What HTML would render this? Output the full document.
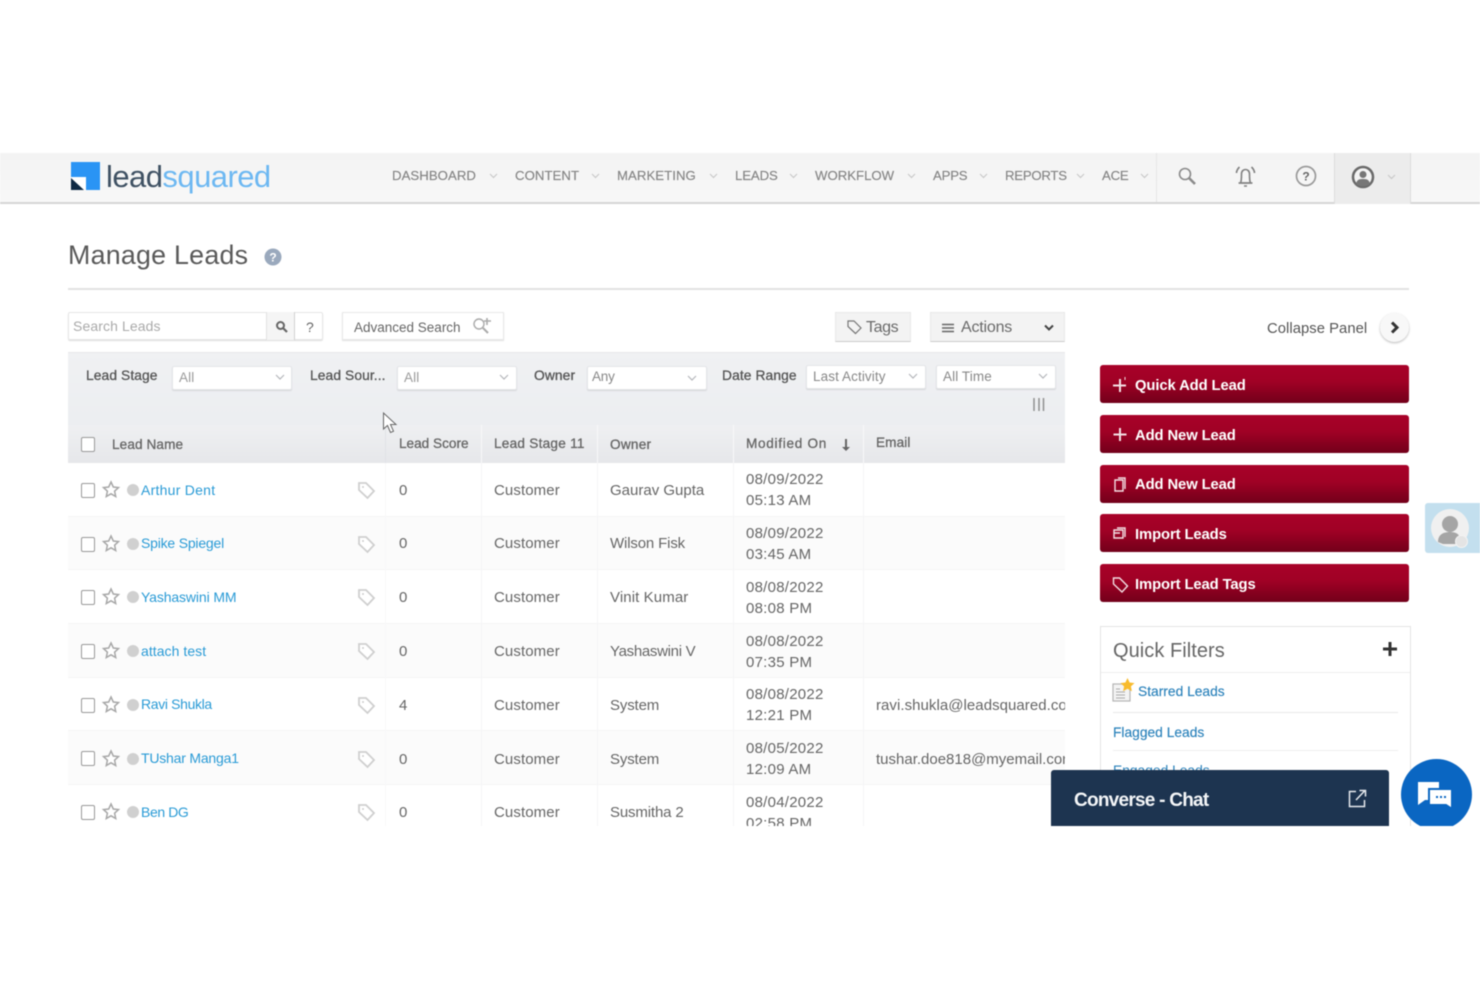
<!DOCTYPE html>
<html><head><meta charset="utf-8"><title>Manage Leads</title>
<style>
html,body{margin:0;padding:0;background:#fff}
#p{position:relative;width:1480px;height:987px;overflow:hidden;background:#fff;font-family:"Liberation Sans",sans-serif;color:#666;filter:blur(.5px)}
#p div,#p span.t,#p svg{position:absolute}
.t{position:absolute;white-space:nowrap;font-size:14px;line-height:18px;letter-spacing:.1px}
.nav{color:#858585;font-size:13.2px;top:167px;letter-spacing:.05px;-webkit-text-stroke:.15px #858585}
.th{color:#666;font-size:13.6px;font-weight:400;-webkit-text-stroke:.3px #666}
.lb{color:#555;font-size:13.8px;-webkit-text-stroke:.3px #555}
.lnk{color:#2a9bd6;font-size:14px;letter-spacing:-.05px}
.d{font-size:15px;letter-spacing:.25px}
.sel{background:#fff;border:1px solid #e4e5e8;border-radius:2px;box-sizing:border-box;height:24px;box-shadow:0 1px 1px #d5d6da}
.cb{width:12px;height:13px;border:1.5px solid #999;border-radius:2px;background:#fff;left:81px;box-sizing:content-box}
.btn{left:1100px;width:309px;height:38px;border-radius:3px;background:linear-gradient(#a80229 0%,#a00125 45%,#72001a 100%)}
.bt{color:#fff;font-size:14.8px;font-weight:700;left:1135px;letter-spacing:-.1px}
</style></head><body><div id="p">

<!-- nav -->
<div style="left:0;top:153px;width:1480px;height:49px;background:linear-gradient(#f3f3f3,#f8f8f8);border-bottom:2px solid #d6d6d6"></div>
<div style="left:1156px;top:153px;width:1px;height:49px;background:#e6e6e6"></div>
<div style="left:1334px;top:153px;width:77px;height:51px;background:#ececec;border-left:1px solid #dcdcdc;border-right:1px solid #dcdcdc;box-sizing:border-box"></div>

<svg style="left:71px;top:162px" width="29" height="28" viewBox="0 0 29 28"><rect width="29" height="28" fill="#2a94f4"/><rect y="15" width="15" height="13" fill="#fff"/><path d="M0 16v12h13z" fill="#0f2a44"/></svg>
<span class="t" style="left:106px;top:158px;font-size:31px;line-height:38px;letter-spacing:-.55px;color:#3f5163">lead<span style="color:#6db8f2">squared</span></span>

<span class="t nav" style="left:392px">DASHBOARD</span>
<span class="t nav" style="left:515px">CONTENT</span>
<span class="t nav" style="left:617px">MARKETING</span>
<span class="t nav" style="left:735px;letter-spacing:-.1px">LEADS</span>
<span class="t nav" style="left:815px;letter-spacing:0">WORKFLOW</span>
<span class="t nav" style="left:933px;letter-spacing:-.2px">APPS</span>
<span class="t nav" style="left:1005px;letter-spacing:-.25px">REPORTS</span>
<span class="t nav" style="left:1102px;letter-spacing:-.2px">ACE</span>
<svg style="left:0;top:0" width="1480" height="210" fill="none" stroke="#c9c9c9" stroke-width="1.200"><path d="M490 174l3.500 3.500 3.500-3.500M592 174l3.500 3.500 3.500-3.500M710 174l3.500 3.500 3.500-3.500M790 174l3.500 3.500 3.500-3.500M908 174l3.500 3.500 3.500-3.500M980 174l3.500 3.500 3.500-3.500M1077 174l3.500 3.500 3.500-3.500M1141 174l3.500 3.500 3.500-3.500M1388 175l3.500 3.500 3.500-3.500"/></svg>
<svg style="left:1177px;top:166px" width="20" height="20" fill="none" stroke="#8b8b8b"><circle cx="8" cy="8" r="5.500" stroke-width="1.600"/><path d="M12 12l6 6" stroke-width="2.600"/></svg>
<svg style="left:1235px;top:165px" width="21" height="24" fill="none" stroke="#808080" stroke-width="1.600"><path d="M5.500 18c1-2 1-5 1-9 0-6 8-6 8 0 0 4 0 7 1 9z"/><path d="M3.500 18h14M9 21h3M1.500 8c0-2 1-4 3-6M19.500 8c0-2-1-4-3-6"/></svg>
<svg style="left:1295px;top:165px" width="22" height="22" fill="none"><circle cx="11" cy="11" r="9.500" stroke="#9a9a9a" stroke-width="1.700"/><text x="11" y="15.500" font-family="Liberation Sans" font-weight="700" font-size="12" text-anchor="middle" fill="#666">?</text></svg>
<svg style="left:1351px;top:165px" width="24" height="24"><circle cx="12" cy="12" r="10" fill="#f4f4f4" stroke="#6a6a6a" stroke-width="2.500"/><circle cx="12" cy="9.500" r="3.500" fill="#777"/><path d="M5 19c1-5 4-5 7-5s6 0 7 5c-3 3-11 3-14 0z" fill="#777"/></svg>

<!-- title -->
<span class="t" style="left:68px;top:236px;font-size:26.800px;line-height:38px;color:#5a5a5a;letter-spacing:.25px">Manage Leads</span>
<svg style="left:264px;top:248px" width="18" height="18"><circle cx="9" cy="9" r="8.500" fill="#9aa9bd"/><text x="9" y="13.500" font-family="Liberation Sans" font-weight="700" font-size="12" text-anchor="middle" fill="#fff">?</text></svg>
<div style="left:68px;top:288px;width:1341px;height:1.500px;background:#e2e2e2"></div>

<!-- search -->
<div style="left:68px;top:312px;width:255px;height:28px;border:1px solid #e6e6e6;border-radius:2px;box-sizing:border-box;box-shadow:0 1px 1px #ddd"></div>
<span class="t" style="left:73px;top:317px;color:#aaa;font-size:14px">Search Leads</span>
<div style="left:266px;top:312px;width:29px;height:28px;background:#f5f5f5;border-left:1px solid #e2e2e2;border-right:1px solid #d2d2d2;box-sizing:border-box"></div>
<svg style="left:275px;top:320px" width="13" height="13" fill="none" stroke="#666"><circle cx="5.500" cy="5.500" r="3.500" stroke-width="2"/><path d="M8 8l4 4" stroke-width="2.200"/></svg>
<span class="t" style="left:306px;top:318px;color:#666">?</span>
<div style="left:342px;top:312px;width:162px;height:28px;border:1px solid #e8e8e8;box-sizing:border-box;box-shadow:0 1px 1px #e2e2e2"></div>
<span class="t" style="left:354px;top:319px;color:#666;font-size:13.500px;letter-spacing:0">Advanced Search</span>
<svg style="left:472px;top:317px" width="20" height="18" fill="none" stroke="#aaa" stroke-width="1.400"><circle cx="7" cy="7" r="5"/><path d="M11 11l5 5" stroke-width="2"/><path d="M15 1v7M12 4h7" stroke-width="1.600"/></svg>

<!-- tags / actions -->
<div style="left:835px;top:312px;width:76px;height:30px;background:#f3f3f3;border:1px solid #e8e8e8;border-bottom:1.500px solid #ccc;box-sizing:border-box"></div>
<svg style="left:847px;top:320px" width="16" height="15" fill="none" stroke="#777" stroke-width="1.200"><path d="M1 1h6l7 7-5.500 5.500-7.500-7z"/></svg>
<span class="t" style="left:866px;top:319px;font-size:16px;color:#6a6a6a;letter-spacing:-.4px">Tags</span>
<div style="left:930px;top:312px;width:135px;height:30px;background:#f3f3f3;border:1px solid #e8e8e8;border-bottom:1.500px solid #ccc;box-sizing:border-box"></div>
<svg style="left:942px;top:323px" width="12" height="10" stroke="#666" stroke-width="1.500"><path d="M0 1.500h12M0 5h12M0 8.500h12"/></svg>
<span class="t" style="left:961px;top:319px;font-size:16px;color:#6a6a6a;letter-spacing:-.2px">Actions</span>
<svg style="left:1044px;top:324px" width="10" height="8" fill="none" stroke="#444" stroke-width="2"><path d="M1 1.500l4 4 4-4"/></svg>

<!-- filter bar -->
<div style="left:68px;top:352px;width:997px;height:73px;background:linear-gradient(#f0f1f3,#eceef1);border-top:1px solid #e8e8ea;box-sizing:border-box"></div>
<span class="t lb" style="left:86px;top:367px">Lead Stage</span>
<div class="sel" style="left:172px;top:366px;width:120px"></div>
<span class="t" style="left:179px;top:369px;color:#9a9a9a;font-size:13.500px">All</span>
<span class="t lb" style="left:310px;top:367px">Lead Sour...</span>
<div class="sel" style="left:397px;top:366px;width:120px"></div>
<span class="t" style="left:404px;top:369px;color:#9a9a9a;font-size:13.500px">All</span>
<span class="t lb" style="left:534px;top:367px">Owner</span>
<div class="sel" style="left:587px;top:366px;width:120px"></div>
<span class="t" style="left:592px;top:368px;color:#888;font-size:13.500px;letter-spacing:-.2px">Any</span>
<span class="t lb" style="left:722px;top:367px">Date Range</span>
<div class="sel" style="left:806px;top:365px;width:120px"></div>
<span class="t" style="left:813px;top:368px;color:#888;font-size:13.500px">Last Activity</span>
<div class="sel" style="left:936px;top:365px;width:120px"></div>
<span class="t" style="left:943px;top:368px;color:#888;font-size:13.500px">All Time</span>
<svg style="left:0;top:0" width="1480" height="420" fill="none" stroke="#b5b7bb" stroke-width="1.200"><path d="M276 375l4 4 4-4M500 375l4 4 4-4M688 376l4 4 4-4M909 374l4 4 4-4M1039 374l4 4 4-4"/><path d="M1034 398v13M1039 398v13M1043.500 398v13" stroke="#8f8f8f" stroke-width="1.500"/></svg>

<!-- table header -->
<div style="left:68px;top:425px;width:997px;height:38px;background:linear-gradient(#eff0f2,#e6e7ea)"></div>
<div style="left:385px;top:425px;width:1px;height:38px;background:#e0e2e6"></div>
<div style="left:481px;top:425px;width:1px;height:38px;background:#f8f8f9"></div>
<div style="left:597px;top:425px;width:1px;height:38px;background:#f8f8f9"></div>
<div style="left:733px;top:425px;width:1px;height:38px;background:#f8f8f9"></div>
<div style="left:863px;top:425px;width:1px;height:38px;background:#f8f8f9"></div>
<div class="cb" style="top:437px"></div>
<span class="t th" style="left:112px;top:436px">Lead Name</span>
<span class="t th" style="left:399px;top:435px;letter-spacing:0">Lead Score</span>
<span class="t th" style="left:494px;top:435px;letter-spacing:.25px">Lead Stage 11</span>
<span class="t th" style="left:610px;top:436px;letter-spacing:.25px">Owner</span>
<span class="t th" style="left:746px;top:435px;letter-spacing:.7px">Modified On</span>
<svg style="left:841px;top:439px" width="10" height="13" fill="#666"><path d="M4 0h2v8h3l-4 4-4-4h3z"/></svg>
<span class="t th" style="left:876px;top:434px">Email</span>

<!-- rows backgrounds -->
<div style="left:68px;top:517px;width:997px;height:53px;background:#fbfbfb"></div>
<div style="left:68px;top:624px;width:997px;height:53px;background:#fbfbfb"></div>
<div style="left:68px;top:731px;width:997px;height:53px;background:#fbfbfb"></div>
<div style="left:68px;top:516px;width:997px;height:1px;background:#f5f5f6"></div>
<div style="left:68px;top:569px;width:997px;height:1px;background:#f5f5f6"></div>
<div style="left:68px;top:623px;width:997px;height:1px;background:#f5f5f6"></div>
<div style="left:68px;top:677px;width:997px;height:1px;background:#f5f5f6"></div>
<div style="left:68px;top:730px;width:997px;height:1px;background:#f5f5f6"></div>
<div style="left:68px;top:784px;width:997px;height:1px;background:#f5f5f6"></div>
<div style="left:481px;top:463px;width:1px;height:363px;background:#f5f5f6"></div>
<div style="left:597px;top:463px;width:1px;height:363px;background:#f5f5f6"></div>
<div style="left:733px;top:463px;width:1px;height:363px;background:#f5f5f6"></div>
<div style="left:863px;top:463px;width:1px;height:363px;background:#f5f5f6"></div>
<div style="left:385px;top:463px;width:1px;height:363px;background:#f8f8f9"></div>

<!-- row icons -->
<svg style="left:0;top:0" width="400" height="830">
<defs>
<g id="ri"><path d="M111 -8l2.300 5 5.200.6-3.900 3.600 1.100 5.300-4.700-2.700-4.700 2.700 1.100-5.300-3.900-3.600 5.200-.6z" fill="#fff" stroke="#a8a8a8" stroke-width="1.500"/><circle cx="133" cy="0" r="6" fill="#d0d0d0"/><path d="M359 -7h7l8 8-6.500 7-8.500-8z" fill="#fff" stroke="#cfcfcf" stroke-width="1.800"/><circle cx="363" cy="-3" r="1" fill="#cfcfcf"/></g>
</defs>
<use href="#ri" y="490"/><use href="#ri" y="544"/><use href="#ri" y="597"/><use href="#ri" y="651"/><use href="#ri" y="705"/><use href="#ri" y="759"/><use href="#ri" y="812"/>
</svg>
<div class="cb" style="top:483px"></div><div class="cb" style="top:537px"></div><div class="cb" style="top:590px"></div><div class="cb" style="top:644px"></div><div class="cb" style="top:698px"></div><div class="cb" style="top:751px"></div><div class="cb" style="top:805px"></div>

<span class="t lnk" style="left:141px;top:481px;letter-spacing:.25px">Arthur Dent</span>
<span class="t lnk" style="left:141px;top:534px;letter-spacing:-.2px">Spike Spiegel</span>
<span class="t lnk" style="left:141px;top:588px;letter-spacing:-.12px">Yashaswini MM</span>
<span class="t lnk" style="left:141px;top:642px;letter-spacing:.05px">attach test</span>
<span class="t lnk" style="left:141px;top:695px;letter-spacing:-.35px">Ravi Shukla</span>
<span class="t lnk" style="left:141px;top:749px;letter-spacing:-.2px">TUshar Manga1</span>
<span class="t lnk" style="left:141px;top:803px;letter-spacing:-.4px">Ben DG</span>

<span class="t" style="left:399px;top:482px;font-size:15px">0</span><span class="t" style="left:494px;top:482px;font-size:15px">Customer</span><span class="t" style="left:610px;top:482px;font-size:15px;letter-spacing:0">Gaurav Gupta</span><span class="t d" style="left:746px;top:471px">08/09/2022</span><span class="t d" style="left:746px;top:492px">05:13 AM</span>
<span class="t" style="left:399px;top:535px;font-size:15px">0</span><span class="t" style="left:494px;top:535px;font-size:15px">Customer</span><span class="t" style="left:610px;top:535px;font-size:15px;letter-spacing:-.15px">Wilson Fisk</span><span class="t d" style="left:746px;top:525px">08/09/2022</span><span class="t d" style="left:746px;top:546px">03:45 AM</span>
<span class="t" style="left:399px;top:589px;font-size:15px">0</span><span class="t" style="left:494px;top:589px;font-size:15px">Customer</span><span class="t" style="left:610px;top:589px;font-size:15px">Vinit Kumar</span><span class="t d" style="left:746px;top:579px">08/08/2022</span><span class="t d" style="left:746px;top:600px">08:08 PM</span>
<span class="t" style="left:399px;top:643px;font-size:15px">0</span><span class="t" style="left:494px;top:643px;font-size:15px">Customer</span><span class="t" style="left:610px;top:643px;font-size:15px;letter-spacing:-.3px">Yashaswini V</span><span class="t d" style="left:746px;top:633px">08/08/2022</span><span class="t d" style="left:746px;top:654px">07:35 PM</span>
<span class="t" style="left:399px;top:697px;font-size:15px">4</span><span class="t" style="left:494px;top:697px;font-size:15px">Customer</span><span class="t" style="left:610px;top:697px;font-size:15px;letter-spacing:-.15px">System</span><span class="t d" style="left:746px;top:686px">08/08/2022</span><span class="t d" style="left:746px;top:707px">12:21 PM</span>
<span class="t" style="left:399px;top:751px;font-size:15px">0</span><span class="t" style="left:494px;top:751px;font-size:15px">Customer</span><span class="t" style="left:610px;top:751px;font-size:15px;letter-spacing:-.15px">System</span><span class="t d" style="left:746px;top:740px">08/05/2022</span><span class="t d" style="left:746px;top:761px">12:09 AM</span>
<span class="t" style="left:399px;top:804px;font-size:15px">0</span><span class="t" style="left:494px;top:804px;font-size:15px">Customer</span><span class="t" style="left:610px;top:804px;font-size:15px;letter-spacing:-.15px">Susmitha 2</span><span class="t d" style="left:746px;top:794px">08/04/2022</span><span class="t d" style="left:746px;top:815px">02:58 PM</span>

<div style="left:876px;top:690px;width:189px;height:90px;overflow:hidden">
<span class="t" style="left:0;top:7px;font-size:15px;letter-spacing:.05px">ravi.shukla@leadsquared.com</span>
<span class="t" style="left:0;top:61px;font-size:15px;letter-spacing:0">tushar.doe818@myemail.com</span>
</div>

<!-- cursor -->
<svg style="left:382px;top:412px" width="17" height="23"><path d="M1.500 1v16l4-3.500 3 7 3-1.300-3-6.700h5.500z" fill="#fff" stroke="#666" stroke-width="1"/></svg>

<!-- right panel -->
<span class="t" style="left:1267px;top:320px;font-size:14.800px;color:#555;letter-spacing:.05px">Collapse Panel</span>
<div style="left:1380px;top:313px;width:29px;height:29px;border-radius:50%;background:#f8f8f8;box-shadow:0 1px 2px #bbb"></div>
<svg style="left:1390px;top:321px" width="10" height="13" fill="none" stroke="#333" stroke-width="3"><path d="M2 1.500l5 5-5 5"/></svg>

<div class="btn" style="top:365px"></div><div class="btn" style="top:415px"></div><div class="btn" style="top:465px"></div><div class="btn" style="top:514px"></div><div class="btn" style="top:564px"></div>
<span class="t bt" style="top:377px">Quick Add Lead</span>
<span class="t bt" style="top:427px">Add New Lead</span>
<span class="t bt" style="top:476px">Add New Lead</span>
<span class="t bt" style="top:526px">Import Leads</span>
<span class="t bt" style="top:576px">Import Lead Tags</span>
<svg style="left:1110px;top:370px" width="22" height="230" fill="none" stroke="#f3dfe3" stroke-width="1.400">
<path d="M10 9v13M3 15.500h13" stroke-width="2"/><path d="M15 7v3" stroke-width="1"/>
<path d="M10 58v13M3.500 64.500h13" stroke-width="2"/>
<path d="M5 110h8v11H5zM8 108h7v11"/>
<path d="M4 160h9v8H4zM7 158h8v9M4 163h6" />
<path d="M3.500 208h6l8 8-5.500 6-8.500-8z"/>
</svg>

<!-- quick filters -->
<div style="left:1100px;top:626px;width:311px;height:210px;border:1.500px solid #e4e4e4;box-sizing:border-box;background:#fff"></div>
<span class="t" style="left:1113px;top:639px;font-size:20px;line-height:25px;color:#666;letter-spacing:.05px">Quick Filters</span>
<svg style="left:1383px;top:642px" width="14" height="14"><path d="M5.500 0h3v5.500H14v3H8.500V14h-3V8.500H0v-3h5.500z" fill="#333"/></svg>
<div style="left:1101px;top:672px;width:309px;height:1px;background:#eee"></div>
<svg style="left:1112px;top:677px" width="24" height="25"><rect x="1" y="7" width="17" height="17" fill="#f4f4f4" stroke="#b5b5b5" stroke-width="1.200"/><path d="M4 12h4M4 15h9M4 18h9M4 21h9" stroke="#a8a8a8"/><path d="M15.500 1l2.100 4.500 4.900.6-3.600 3.300 1 4.900-4.400-2.500-4.400 2.500 1-4.900-3.600-3.300 4.900-.6z" fill="#f8bb2c"/></svg>
<span class="t" style="left:1138px;top:683px;color:#2b82bb;font-size:13.800px;letter-spacing:0;-webkit-text-stroke:.15px #2b82bb">Starred Leads</span>
<div style="left:1113px;top:712px;width:285px;height:1px;background:#e8e8e8"></div>
<span class="t" style="left:1113px;top:724px;color:#2b82bb;font-size:13.800px;letter-spacing:0;-webkit-text-stroke:.15px #2b82bb">Flagged Leads</span>
<div style="left:1113px;top:750px;width:285px;height:1px;background:#eee"></div>
<span class="t" style="left:1113px;top:762px;color:#2b82bb;font-size:13.800px;letter-spacing:0">Engaged Leads</span>

<!-- avatar tab -->
<div style="left:1425px;top:503px;width:55px;height:50px;background:#c3dfee;border-radius:3px 0 0 3px"></div>
<div style="left:1431px;top:509px;width:38px;height:38px;border-radius:50%;background:#f0f0f0"></div>
<svg style="left:1431px;top:509px" width="40" height="40"><circle cx="19" cy="15" r="8" fill="#a5a5a5"/><path d="M7 33c0-8 6-10 12-10s9 2 10 6l-4 6H12z" fill="#a5a5a5"/><circle cx="30.500" cy="32.500" r="6" fill="#e4e4e4" stroke="#f3f3f3"/></svg>

<!-- chat -->
<div style="left:1051px;top:770px;width:338px;height:57px;background:#1d3450;border-radius:3px 3px 0 0"></div>
<span class="t" style="left:1074px;top:788px;font-size:19px;line-height:25px;font-weight:700;color:#f4f6f8;letter-spacing:-.75px">Converse - Chat</span>
<svg style="left:1348px;top:789px" width="19" height="19" fill="none" stroke="#e6eaee" stroke-width="1.500"><path d="M8 2.500H1.500v15h15V11M8 11l9-9.500M11.500 1.500h6v6"/></svg>
<div style="left:1401px;top:759px;width:71px;height:71px;border-radius:50%;background:#0a66c2"></div>
<svg style="left:1416px;top:780px" width="42" height="35"><path d="M2 2h21v18H9l-7 5z" fill="#fff"/><path d="M13 9h23v20l-6-4H13z" fill="#fff" stroke="#0a66c2" stroke-width="2"/><path d="M20 17h2M24 17h2M28 17h2" stroke="#0a66c2" stroke-width="2"/></svg>

<!-- bottom mask: content clipped at 826 -->
<div style="left:0;top:826px;width:1480px;height:161px;background:#fff"></div>
</div></body></html>
